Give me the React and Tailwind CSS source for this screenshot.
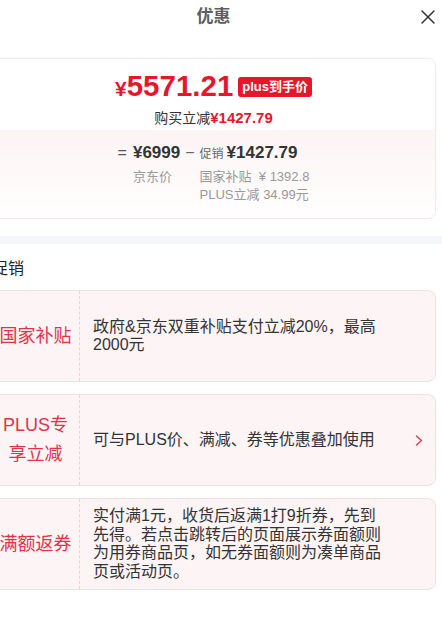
import React from "react";

const FONT = { fontFamily: '"Liberation Sans", "Noto Sans CJK SC", sans-serif' };

function CloseIcon() {
  return (
    <svg width="14" height="14" viewBox="0 0 14 14" fill="none">
      <path d="M1 1L13 13M13 1L1 13" stroke="#333" strokeWidth="1.5" strokeLinecap="round" />
    </svg>
  );
}

function Chevron() {
  return (
    <svg width="8" height="11" viewBox="0 0 8 11" fill="none">
      <path d="M1.5 1L6.5 5.5L1.5 10" stroke="#e0364f" strokeWidth="1.4" strokeLinecap="round" strokeLinejoin="round" />
    </svg>
  );
}

function PromoCard({ label, text, arrow }) {
  return (
    <div className="flex min-h-[92px] rounded-lg border border-[#f2dfe2] bg-[#fdf4f5]">
      {/* Label */}
      <div className="flex w-[88px] shrink-0 items-center justify-center border-r border-dashed border-[#ecd2d6] px-[4px] text-center text-[18px] leading-[29px] text-[#e3314a]">
        {label}
      </div>

      {/* Body */}
      <div className="flex flex-1 items-center py-2 pl-[13px] pr-[12px]">
        <div className="flex-1 pr-[24px] text-[16px] leading-[18.5px] text-[#333]">{text}</div>
        <div className="flex w-[8px] justify-center">{arrow ? <Chevron /> : null}</div>
      </div>
    </div>
  );
}

export default function App() {
  return (
    <div className="w-[442px] overflow-hidden bg-white" style={FONT}>
      <div className="ml-[-15px] w-[457px]">
        {/* Header */}
        <div className="grid h-[34px] grid-cols-[1fr_auto_1fr] items-center">
          <div />
          <div className="text-[17px] font-bold text-[#5e5e5e]">优惠</div>
          <div className="flex justify-end pr-[7px]">
            <CloseIcon />
          </div>
        </div>

        {/* Price card */}
        <div className="mt-[24px] px-[6px]">
          <div className="overflow-hidden rounded-lg border border-[#ebebeb] shadow-[0_0_3px_rgba(0,0,0,0.04)]">
            <div className="flex flex-col items-center bg-white pb-[2px] pt-[11px]">
              <div className="flex h-[34px] items-center gap-[5px]">
                <div className="flex items-baseline font-bold text-[#e6162d]">
                  <span className="text-[21px]">¥</span>
                  <span className="text-[29.5px] leading-[34px]">5571.21</span>
                </div>
                <div className="flex h-[20px] items-center rounded-[3px] bg-[#e6162d] px-[4px] text-[13px] font-bold text-white">
                  plus到手价
                </div>
              </div>
              <div className="mt-[4px] flex h-[20px] items-center text-[14px] leading-[20px]">
                <span className="text-[#333]">购买立减</span>
                <span className="text-[15px] font-semibold text-[#e6162d]">¥1427.79</span>
              </div>
            </div>

            <div className="flex justify-center bg-gradient-to-b from-[#fdf4f4] to-[#fffefe] pb-[14px] pt-[11px]">
              <div className="flex items-start">
                <span className="mr-[6px] h-[24px] text-[16px] leading-[24px] text-[#555]">=</span>
                <div className="flex flex-col">
                  <span className="h-[24px] text-[17px] font-semibold leading-[24px] text-[#333]">¥6999</span>
                  <span className="mt-[3px] text-[13px] leading-[18px] text-[#999]">京东价</span>
                </div>
                <span className="mx-[5px] h-[24px] text-[16px] leading-[24px] text-[#666]">−</span>
                <div className="flex flex-col">
                  <div className="flex h-[24px] items-baseline">
                    <span className="mr-[3px] text-[12px] text-[#666]">促销</span>
                    <span className="text-[17px] font-semibold leading-[24px] text-[#333]">¥1427.79</span>
                  </div>
                  <span className="mt-[3px] text-[13px] leading-[18px] text-[#999]">国家补贴&nbsp;&nbsp;¥ 1392.8</span>
                  <span className="text-[13px] leading-[18px] text-[#999]">PLUS立减 34.99元</span>
                </div>
              </div>
            </div>
          </div>
        </div>

        {/* Divider band */}
        <div className="mt-[17px] h-[8px] bg-[#f5f6fa]" />

        {/* Promotions */}
        <div className="px-[6px] pb-[40px] pt-[14px]">
          <div className="pl-[1px] text-[16px] leading-[22px] text-[#222]">促销</div>
          <div className="mt-[10px] flex flex-col gap-[12px]">
            <PromoCard label="国家补贴" text="政府&京东双重补贴支付立减20%，最高2000元" />
            <PromoCard label="PLUS专享立减" text="可与PLUS价、满减、券等优惠叠加使用" arrow />
            <PromoCard
              label="满额返券"
              text="实付满1元，收货后返满1打9折券，先到先得。若点击跳转后的页面展示券面额则为用券商品页，如无券面额则为凑单商品页或活动页。"
            />
          </div>
        </div>
      </div>
    </div>
  );
}
